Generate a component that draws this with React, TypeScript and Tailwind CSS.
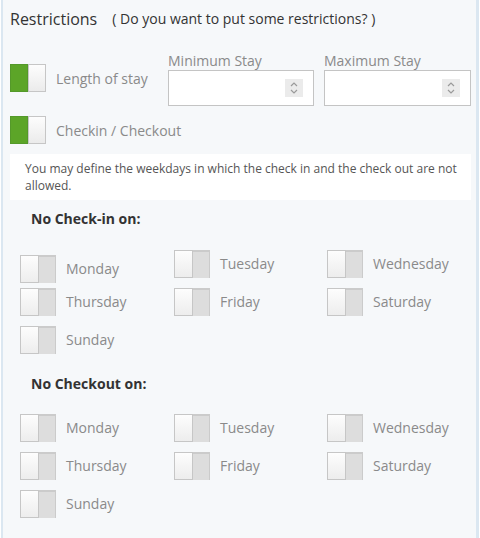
import React from "react";

function Toggle({ on }: { on?: boolean }) {
  if (on) {
    return (
      <div className="flex w-[36px] h-[28px] shrink-0">
        <div className="w-[18px] h-full bg-[#5ca528] border border-[#54992a]" />
        <div className="w-[18px] h-full bg-linear-to-b from-[#fdfdfd] to-[#ebebeb] border border-[#c6c6c6]" />
      </div>
    );
  }
  return (
    <div className="flex w-[36px] h-[28px] shrink-0">
      <div className="w-[19px] h-full bg-linear-to-b from-[#fdfdfd] to-[#ededed] border border-[#c6c6c6]" />
      <div className="w-[17px] h-full bg-[#dddddd] border-t-2 border-r border-[#cbcbcb]" />
    </div>
  );
}

function Spinner() {
  return (
    <div className="w-[18px] h-[18px] bg-[#ebebeb] flex items-center justify-center">
      <svg width="10" height="14" viewBox="0 0 10 14" fill="none" stroke="#9a9a9a" strokeWidth="1.2">
        <path d="M2 5 L5 2 L8 5" />
        <path d="M2 9 L5 12 L8 9" />
      </svg>
    </div>
  );
}

function Field({ label, w }: { label: string; w: string }) {
  return (
    <div className={`flex flex-col ${w}`}>
      <div className="text-[14px] leading-[18px] text-[#8a8a8a]">{label}</div>
      <div className="h-[36px] bg-white border border-[#c4c4c4] flex items-center justify-end pr-[10px]">
        <Spinner />
      </div>
    </div>
  );
}

function Day({ name, shift }: { name: string; shift?: boolean }) {
  return (
    <div className={`flex items-center h-[28px] ${shift ? "mt-[5px] -mb-[5px]" : ""}`}>
      <Toggle />
      <span className="ml-[10px] text-[14px] leading-[20px] text-[#8a8a8a]">{name}</span>
    </div>
  );
}

function DayGrid({ shiftMonday }: { shiftMonday?: boolean }) {
  const days = ["Monday", "Tuesday", "Wednesday", "Thursday", "Friday", "Saturday", "Sunday"];
  return (
    <div className="grid grid-cols-[154px_153px_140px] gap-y-[10px] pl-[17px]">
      {days.map((d, i) => (
        <Day key={d} name={d} shift={shiftMonday && i === 0} />
      ))}
    </div>
  );
}

export default function App() {
  return (
    <div
      className="w-[480px] h-[538px] bg-white overflow-hidden pl-[1px]"
      style={{ fontFamily: '"Open Sans", "Noto Sans", sans-serif' }}
    >
      <div className="w-[478px] h-full bg-[#f6f8fa] border-l-2 border-r-[3px] border-[#dbe7f1]">
        <div className="flex items-center pt-[5px] pl-[7px] h-[33px]">
          <span className="text-[16px] leading-[20px] text-[#333]">Restrictions</span>
          <span className="ml-[15px] text-[14px] leading-[20px] text-[#333]">( Do you want to put some restrictions? )</span>
        </div>

        <div className="flex mt-[19px] pl-[7px]">
          <div className="flex items-center w-[158px] h-[28px] mt-[12px]">
            <Toggle on />
            <span className="ml-[10px] text-[14px] text-[#8a8a8a]">Length of stay</span>
          </div>
          <Field label="Minimum Stay" w="w-[146px]" />
          <div className="w-[10px]" />
          <Field label="Maximum Stay" w="w-[147px]" />
        </div>

        <div className="flex items-center h-[28px] mt-[10px] pl-[7px]">
          <Toggle on />
          <span className="ml-[10px] text-[14px] text-[#8a8a8a]">Checkin / Checkout</span>
        </div>

        <div className="ml-[7px] w-[461px] mt-[10px] bg-white pl-[15px] pr-[4px] py-[6px] text-[12px] leading-[17px] text-[#555]">
          You may define the weekdays in which the check in and the check out are not allowed.
        </div>

        <div className="mt-[9px] pl-[28px] text-[14px] leading-[20px] font-bold text-[#333]">No Check-in on:</div>
        <div className="mt-[21px]">
          <DayGrid shiftMonday />
        </div>

        <div className="mt-[20px] pl-[28px] text-[14px] leading-[20px] font-bold text-[#333]">No Checkout on:</div>
        <div className="mt-[20px]">
          <DayGrid />
        </div>
      </div>
    </div>
  );
}
